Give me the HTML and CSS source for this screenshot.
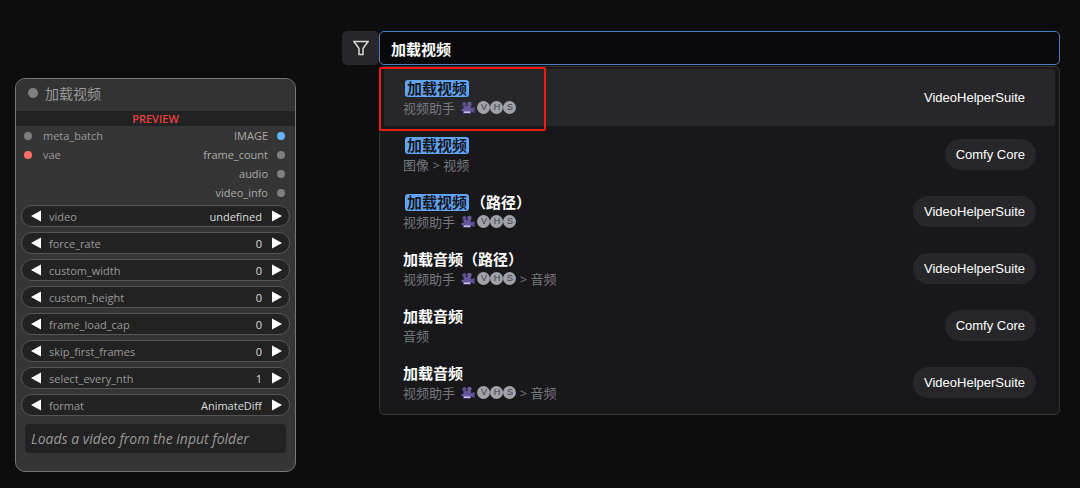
FILE: index.html
```html
<!DOCTYPE html>
<html lang="zh-CN">
<head>
    <meta charset="UTF-8">
    <meta name="viewport" content="width=device-width, initial-scale=1.0">
    <title>加载视频</title>
    <link rel="stylesheet" href="styles.css">
</head>
<body>
    <svg class="symbols" aria-hidden="true">
        <symbol id="prev" viewBox="0 0 10 12"><path d="M10 0.5v11L0 6z"/></symbol>
        <symbol id="next" viewBox="0 0 10 12"><path d="M0 0.5v11L10 6z"/></symbol>
        <symbol id="camera" viewBox="0 0 14 13">
            <circle cx="3.4" cy="3.2" r="2.1" fill="#5b4d85"/>
            <circle cx="8.4" cy="3" r="2.3" fill="#6a5a9a"/>
            <path d="M2.500 5h7.500v2.500l3.400-1.500v6L10 10.500V12.500H2V10L0.400 10.300V8L2.500 8z" fill="#6656a0"/>
            <path d="M3 10.400h6v1.600H3z" fill="#c9bfe0"/>
            <path d="M12.400 6h1.200v6h-1.200z" fill="#4b3f78"/>
        </symbol>
    </svg>

    <main class="canvas">
        <section class="node">
            <h1 class="node-title"><span class="dot dot-title"></span>加载视频</h1>
            <div class="preview">PREVIEW</div>

            <div class="slots">
                <ul class="inputs">
                    <li><span class="dot"></span>meta_batch</li>
                    <li><span class="dot dot-red"></span>vae</li>
                </ul>
                <ul class="outputs">
                    <li>IMAGE<span class="dot dot-blue"></span></li>
                    <li>frame_count<span class="dot"></span></li>
                    <li>audio<span class="dot"></span></li>
                    <li>video_info<span class="dot"></span></li>
                </ul>
            </div>

            <div class="widgets">
                <div class="widget">
                    <button class="arrow" aria-label="Previous video"><svg><use href="#prev"/></svg></button>
                    <label for="video">video</label>
                    <select id="video"><option>undefined</option></select>
                    <button class="arrow" aria-label="Next video"><svg><use href="#next"/></svg></button>
                </div>
                <div class="widget">
                    <button class="arrow" aria-label="Decrease force_rate"><svg><use href="#prev"/></svg></button>
                    <label for="force_rate">force_rate</label>
                    <input type="text" id="force_rate" value="0">
                    <button class="arrow" aria-label="Increase force_rate"><svg><use href="#next"/></svg></button>
                </div>
                <div class="widget">
                    <button class="arrow" aria-label="Decrease custom_width"><svg><use href="#prev"/></svg></button>
                    <label for="custom_width">custom_width</label>
                    <input type="text" id="custom_width" value="0">
                    <button class="arrow" aria-label="Increase custom_width"><svg><use href="#next"/></svg></button>
                </div>
                <div class="widget">
                    <button class="arrow" aria-label="Decrease custom_height"><svg><use href="#prev"/></svg></button>
                    <label for="custom_height">custom_height</label>
                    <input type="text" id="custom_height" value="0">
                    <button class="arrow" aria-label="Increase custom_height"><svg><use href="#next"/></svg></button>
                </div>
                <div class="widget">
                    <button class="arrow" aria-label="Decrease frame_load_cap"><svg><use href="#prev"/></svg></button>
                    <label for="frame_load_cap">frame_load_cap</label>
                    <input type="text" id="frame_load_cap" value="0">
                    <button class="arrow" aria-label="Increase frame_load_cap"><svg><use href="#next"/></svg></button>
                </div>
                <div class="widget">
                    <button class="arrow" aria-label="Decrease skip_first_frames"><svg><use href="#prev"/></svg></button>
                    <label for="skip_first_frames">skip_first_frames</label>
                    <input type="text" id="skip_first_frames" value="0">
                    <button class="arrow" aria-label="Increase skip_first_frames"><svg><use href="#next"/></svg></button>
                </div>
                <div class="widget">
                    <button class="arrow" aria-label="Decrease select_every_nth"><svg><use href="#prev"/></svg></button>
                    <label for="select_every_nth">select_every_nth</label>
                    <input type="text" id="select_every_nth" value="1">
                    <button class="arrow" aria-label="Increase select_every_nth"><svg><use href="#next"/></svg></button>
                </div>
                <div class="widget">
                    <button class="arrow" aria-label="Previous format"><svg><use href="#prev"/></svg></button>
                    <label for="format">format</label>
                    <select id="format"><option>AnimateDiff</option></select>
                    <button class="arrow" aria-label="Next format"><svg><use href="#next"/></svg></button>
                </div>
            </div>

            <p class="description">Loads a video from the input folder</p>
        </section>

        <section class="search">
            <div class="search-bar">
                <button class="filter-btn" aria-label="Filter">
                    <svg viewBox="0 0 16 16"><path d="M1 1.500h14L10 8.500V14.500H6V8.500z"/></svg>
                </button>
                <input class="search-input" type="text" aria-label="Search nodes" value="加载视频">
            </div>

            <div class="results">
                <ul class="result-list">
                    <li class="result selected">
                        <div class="result-text">
                            <div class="result-name"><mark>加载视频</mark></div>
                            <div class="result-path">视频助手 <svg class="camera"><use href="#camera"/></svg><span class="badge">V</span><span class="badge">H</span><span class="badge">S</span></div>
                        </div>
                        <span class="tag">VideoHelperSuite</span>
                    </li>
                    <li class="result">
                        <div class="result-text">
                            <div class="result-name"><mark>加载视频</mark></div>
                            <div class="result-path">图像 &gt; 视频</div>
                        </div>
                        <span class="tag">Comfy Core</span>
                    </li>
                    <li class="result">
                        <div class="result-text">
                            <div class="result-name"><mark>加载视频</mark>（路径）</div>
                            <div class="result-path">视频助手 <svg class="camera"><use href="#camera"/></svg><span class="badge">V</span><span class="badge">H</span><span class="badge">S</span></div>
                        </div>
                        <span class="tag">VideoHelperSuite</span>
                    </li>
                    <li class="result">
                        <div class="result-text">
                            <div class="result-name">加载音频（路径）</div>
                            <div class="result-path">视频助手 <svg class="camera"><use href="#camera"/></svg><span class="badge">V</span><span class="badge">H</span><span class="badge">S</span> &gt; 音频</div>
                        </div>
                        <span class="tag">VideoHelperSuite</span>
                    </li>
                    <li class="result">
                        <div class="result-text">
                            <div class="result-name">加载音频</div>
                            <div class="result-path">音频</div>
                        </div>
                        <span class="tag">Comfy Core</span>
                    </li>
                    <li class="result">
                        <div class="result-text">
                            <div class="result-name">加载音频</div>
                            <div class="result-path">视频助手 <svg class="camera"><use href="#camera"/></svg><span class="badge">V</span><span class="badge">H</span><span class="badge">S</span> &gt; 音频</div>
                        </div>
                        <span class="tag">VideoHelperSuite</span>
                    </li>
                </ul>
                <div class="callout"></div>
            </div>
        </section>
    </main>
</body>
</html>
```

FILE: styles.css
```css
* {
    margin: 0;
    padding: 0;
    box-sizing: border-box;
}

body {
    min-height: 100vh;
    background-color: #0d0d0d;
    background-image:
        linear-gradient(to right, rgba(0, 0, 0, 0.06) 1px, transparent 1px),
        linear-gradient(to bottom, rgba(0, 0, 0, 0.06) 1px, transparent 1px);
    background-size: 8px 8px;
    font-family: "Open Sans", "Noto Sans CJK SC", sans-serif;
    font-size: 11px;
    color: #999;
}

ul {
    list-style: none;
}

button,
input,
select {
    font: inherit;
    color: inherit;
    background: none;
    border: none;
    outline: none;
    appearance: none;
}

.symbols {
    display: none;
}

.canvas {
    display: flex;
    align-items: flex-start;
    gap: 46px;
    padding: 31px 20px 16px 15px;
}

/* Node */
.node {
    flex: 0 0 281px;
    margin-top: 47px;
    background: #353535;
    border: 1px solid #777;
    border-radius: 10px;
    overflow: hidden;
}

.node-title {
    display: flex;
    align-items: center;
    gap: 7px;
    height: 32px;
    padding: 0 12px 4px;
    background: #333;
    font-size: 14px;
    font-weight: 400;
}

.dot {
    flex: none;
    width: 8px;
    height: 8px;
    border-radius: 50%;
    background: #7f7f7f;
}

.dot-title {
    width: 10px;
    height: 10px;
}

.dot-red {
    background: #ff6e6e;
}

.dot-blue {
    background: #64b5f6;
}

.preview {
    background: #222;
    color: #e84040;
    font-weight: 600;
    line-height: 15px;
    text-align: center;
}

.slots {
    display: flex;
    justify-content: space-between;
    padding: 0 10px 0 8px;
    margin-bottom: 3px;
}

.slots li {
    display: flex;
    align-items: center;
    height: 19px;
}

.inputs li {
    gap: 11px;
}

.outputs li {
    justify-content: flex-end;
    gap: 9px;
    color: #aaa;
}

.widgets {
    display: grid;
    gap: 5px;
    padding: 0 5px;
}

.widget {
    display: flex;
    align-items: center;
    min-width: 0;
    height: 22px;
    padding: 0 7px 0 9px;
    background: #222;
    border: 1px solid #555;
    border-radius: 11px;
}

.widget label {
    margin-left: 8px;
}

.widget input,
.widget select {
    flex: 1;
    min-width: 0;
    margin-right: 10px;
    color: #ddd;
    text-align: right;
}

.arrow {
    flex: none;
    width: 10px;
    height: 12px;
    cursor: pointer;
}

.arrow svg {
    display: block;
    width: 10px;
    height: 12px;
    fill: #fff;
}

.description {
    margin: 8px 9px 18px;
    padding: 0 6px;
    background: #222;
    border-radius: 4px;
    font-size: 14px;
    font-style: italic;
    line-height: 29px;
}

/* Search */
.search {
    flex: 1;
    min-width: 0;
}

.search-bar {
    display: flex;
    height: 34px;
    margin-bottom: 1px;
}

.filter-btn {
    display: flex;
    align-items: center;
    justify-content: center;
    width: 37px;
    background: #27272a;
    border-radius: 5px;
    cursor: pointer;
}

.filter-btn svg {
    width: 16px;
    height: 16px;
    fill: none;
    stroke: #d8d8d8;
    stroke-width: 1.5;
}

.search-input {
    flex: 1;
    min-width: 0;
    padding: 0 11px;
    background: #09090b;
    border: 1px solid #4580c4;
    border-radius: 5px;
    color: #fff;
    font-size: 15px;
    font-weight: 700;
}

.results {
    position: relative;
    margin-left: 37px;
    padding: 2px 4px 3px;
    background: #18181b;
    border: 1px solid #333336;
    border-radius: 5px;
}

.result {
    display: flex;
    align-items: center;
    justify-content: space-between;
    height: 57px;
    padding: 0 19px;
    border-radius: 3px;
}

.result.selected {
    background: #27272a;
}

.result-name {
    color: #fff;
    font-size: 15px;
    font-weight: 700;
    line-height: 20px;
}

.result-name mark {
    display: inline-block;
    margin: 0 2px;
    padding: 0 2px;
    background: #60a5fa;
    border-radius: 3px;
    color: #18181b;
    line-height: 17px;
}

.result-path {
    display: flex;
    align-items: center;
    color: #77777f;
    font-size: 13px;
    line-height: 20px;
    white-space: pre;
}

.camera {
    width: 14px;
    height: 13px;
    margin: 0 2px 0 3px;
}

.badge {
    width: 13px;
    height: 13px;
    border-radius: 50%;
    background: #a1a1aa;
    color: #3f3f46;
    font-family: "Liberation Sans", sans-serif;
    font-size: 9px;
    line-height: 13px;
    text-align: center;
}

.tag {
    padding: 0 11px;
    border-radius: 16px;
    background: #27272a;
    color: #fff;
    font-family: "Liberation Sans", sans-serif;
    font-size: 13px;
    line-height: 31px;
}

/* Red box over the first result */
.callout {
    position: absolute;
    top: 0;
    left: -1px;
    width: 167px;
    height: 64px;
    border: 2px solid #f21b12;
    border-radius: 2px;
    pointer-events: none;
}
```
